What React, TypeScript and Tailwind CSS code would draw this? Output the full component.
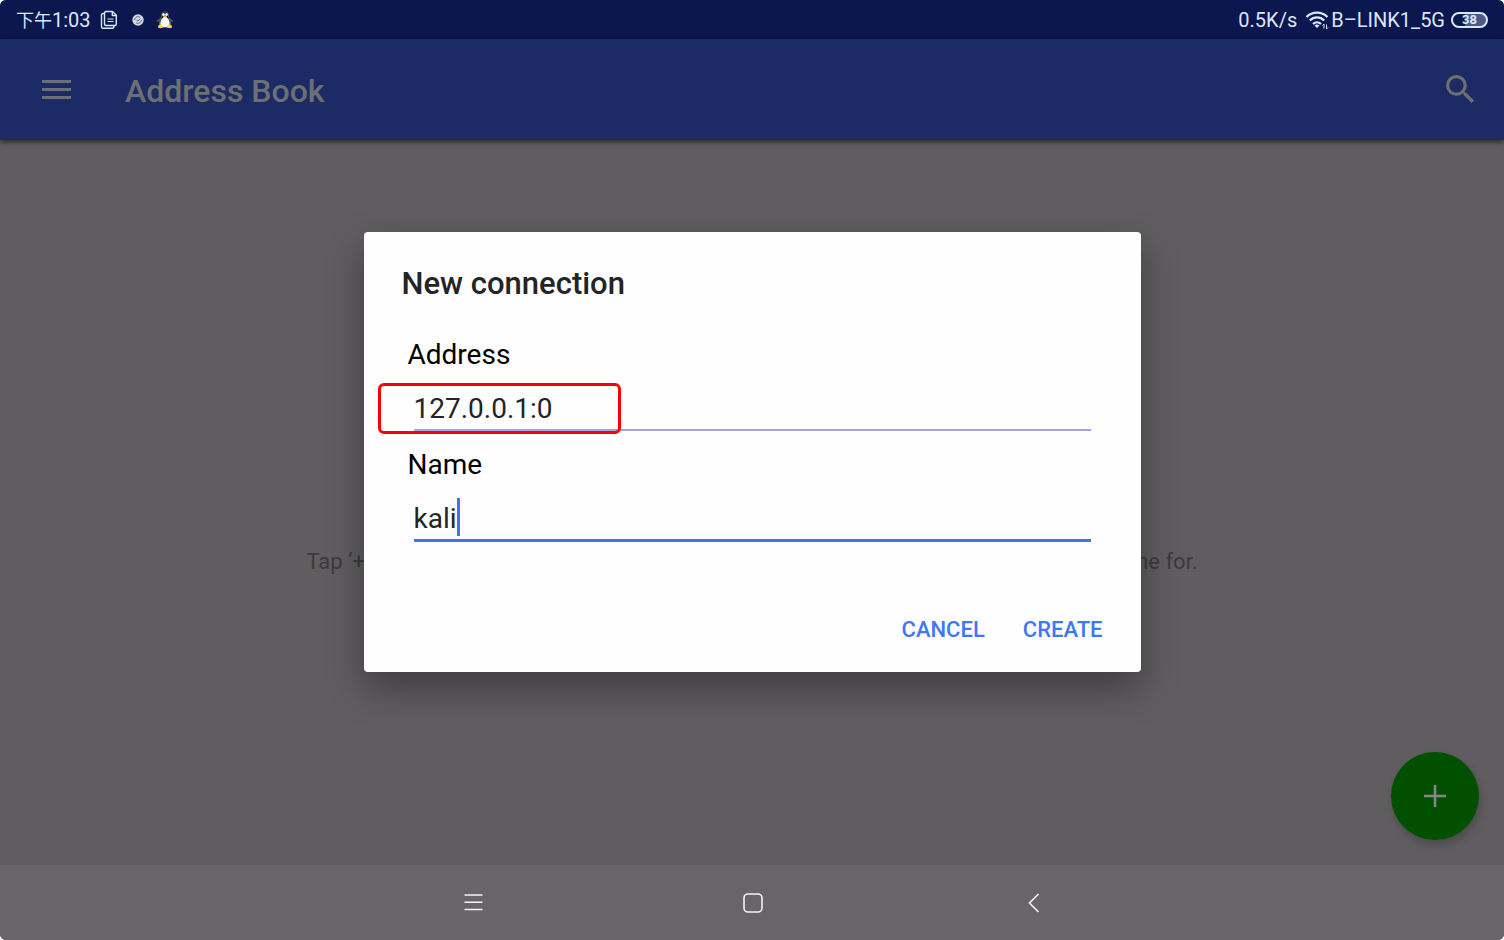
import React from "react";

function ClipboardIcon() {
  return (
    <svg viewBox="0 0 18 20" className="h-5 w-[18px]" fill="none" stroke="#dce6fa" strokeWidth="1.4" strokeLinejoin="round">
      <path d="M6 1.500h6.500L16.300 5.300V14q0 1.500-1.500 1.500H6Q4.500 15.500 4.500 14V3Q4.500 1.500 6 1.500Z" />
      <path d="M12.300 1.500v4h4M4.500 3.500H3Q1.500 3.500 1.500 5V16.500Q1.500 18.300 3 18.300h9.500Q14 18.300 14 15.500" />
      <path d="M7.500 9h6M7.500 11.500h6" strokeWidth="1.100" />
    </svg>
  );
}

function SyncBadgeIcon() {
  return (
    <svg viewBox="0 0 12 12" className="h-3 w-3">
      <circle cx="6" cy="6" r="5.700" fill="#d5dae4" />
      <path d="M2.500 6C3 3 5.500 2 8 3.200M9.500 6C9 9 6.500 10 4 8.800M4.500 6l1.500 1 2.500-2.500" fill="none" stroke="#4a567c" strokeWidth=".9" />
    </svg>
  );
}

function PenguinIcon() {
  return (
    <svg viewBox="0 0 18 18" className="h-[18px] w-[18px]">
      <path d="M1.200 10.500 5 7.500M16.800 10.500 13 7.500" stroke="#4a4f5e" strokeWidth="1.800" />
      <path d="M9 .8C6.400.8 5.500 2.500 5.600 4.600 5.700 7 3.200 9.500 3.400 13L5 16h8l1.600-3c.2-3.500-2.300-6-2.200-8.400C12.500 2.500 11.600.8 9 .8Z" fill="#11141c" stroke="#6b7280" strokeWidth=".8" />
      <path d="M9 5.500C6.300 6 4.300 9.500 4.300 12.500 4.300 15 6.500 16.300 9 16.300s4.700-1.300 4.700-3.800C13.700 9.500 11.700 6 9 5.500Z" fill="#f6f6f2" />
      <ellipse cx="7.500" cy="3.600" rx="1.300" ry="1.600" fill="#fff" />
      <ellipse cx="10.500" cy="3.600" rx="1.300" ry="1.600" fill="#fff" />
      <path d="M7 5.200 9 4.300l2 .9-2 1.300Z" fill="#e8bf35" />
      <path d="M2.300 14.500 5 13l2.500 3.500L4 17.300 2 16.500ZM15.700 14.500 13 13l-2.500 3.500 3.500.8 2-.8Z" fill="#f0dc3c" />
    </svg>
  );
}

function WifiIcon() {
  return (
    <svg viewBox="0 0 24 20" className="h-5 w-6" fill="none" stroke="#dce6fa" strokeWidth="2.200">
      <path d="M1.500 7C7.500 1.200 16.500 1.200 22.500 7M4.800 10.500c4-4.200 10.400-4.200 14.400 0M8 14c2.300-2.300 5.700-2.300 8 0" />
      <path d="M9.500 15.500q2.500-2 5 0L12 18Z" fill="#dce6fa" stroke="none" />
      <path d="M19 14v4.500M19 14l-1.500 1.500M21.500 19V14.500M21.500 19l1.500-1.500" strokeWidth="1" />
    </svg>
  );
}

function StatusBar() {
  return (
    <div className="flex h-[39px] items-center justify-between bg-[#0c164f] px-4 text-xl text-[#dce6fa]">
      <div className="flex items-center">
        <span className="pt-0.5 font-['Roboto','Noto_Sans_CJK_SC',sans-serif]">
          <span className="text-lg">下午</span>1:03
        </span>
        <span className="ml-[9px]"><ClipboardIcon /></span>
        <span className="ml-3.5"><SyncBadgeIcon /></span>
        <span className="ml-3"><PenguinIcon /></span>
      </div>
      <div className="flex items-center font-['Roboto',sans-serif]">
        <span className="pt-px">0.5K/s</span>
        <span className="ml-2"><WifiIcon /></span>
        <span className="ml-0.5 pt-px">B–LINK1_5G</span>
        <span className="ml-1.5 flex h-4 w-[37px] items-center justify-center rounded-full border-2 border-[#dce6fa] bg-linear-to-r from-[#0c164f] from-35% to-[#4d5988] to-35% text-[13px] leading-3 font-bold">
          38
        </span>
      </div>
    </div>
  );
}

function AppBar() {
  return (
    <header className="flex h-[101px] items-center bg-[#1c2b65] pr-[30px] pl-[42px] text-[#6d7073] shadow-[0_2px_5px_rgba(0,0,0,0.6)]">
      <button type="button" aria-label="Menu">
        <svg viewBox="0 0 29 20" className="h-5 w-[29px]" fill="currentColor">
          <path d="M0 0h29v3H0zM0 8h29v3H0zM0 16h29v3H0z" />
        </svg>
      </button>
      <h1 className="ml-[54px] flex-1 pt-0.5 text-[32px] font-medium">Address Book</h1>
      <button type="button" aria-label="Search" className="pb-0.5">
        <svg viewBox="3 3 17.500 17.500" className="h-7 w-7" fill="currentColor">
          <path d="M15.500 14h-.79l-.28-.27A6.471 6.471 0 0 0 16 9.500 6.500 6.500 0 1 0 9.500 16c1.610 0 3.090-.59 4.230-1.570l.27.28v.79l5 4.990L20.490 19l-4.990-5zm-6 0C7.010 14 5 11.990 5 9.500S7.010 5 9.500 5 14 7.010 14 9.500 11.990 14 9.500 14z" />
        </svg>
      </button>
    </header>
  );
}

function ConnectionDialog() {
  return (
    <form
      role="dialog"
      aria-labelledby="dialog-title"
      className="w-[777px] rounded bg-[#fefefe] px-[38px] pt-7 pb-[19px] shadow-[0_16px_36px_rgba(0,0,0,0.35)]"
    >
      <h2 id="dialog-title" className="text-[31px] leading-[48px] font-medium text-[#242426]">
        New connection
      </h2>
      <div className="pt-[22px] pr-3 pl-1.5 text-[28px] text-black">
        <label htmlFor="address" className="block h-12 leading-[50px]">Address</label>
        <div className="relative ml-1.5 h-[53px] border-b-2 border-[#a5a6e0]">
          <input
            id="address"
            defaultValue="127.0.0.1:0"
            className="h-[53px] w-full bg-transparent pt-2 text-[#242426] outline-none"
          />
          <div className="pointer-events-none absolute top-[5px] -left-9 h-[51px] w-[243px] rounded-md border-3 border-[#fb0007]" />
        </div>
        <label htmlFor="name" className="mt-2 block h-12 leading-[52px]">Name</label>
        <div className="ml-1.5 flex h-[55px] items-center border-b-3 border-[#4074ee] pt-2">
          <input
            id="name"
            defaultValue="kali"
            className="field-sizing-content bg-transparent pt-1 text-[#242426] caret-transparent outline-none"
          />
          <span className="h-[38px] w-[3px] bg-[#4074ee]" />
        </div>
      </div>
      <div className="mt-[63px] flex justify-end gap-[38px] text-[22px] font-medium text-[#3f78f2]">
        <button type="button" className="h-12">CANCEL</button>
        <button type="submit" className="h-12">CREATE</button>
      </div>
    </form>
  );
}

function NavigationBar() {
  return (
    <nav className="flex h-[75px] items-center justify-center gap-[260px] bg-[#686568] pl-0.5 text-[#f4f4f4]">
      <button type="button" aria-label="Recent apps">
        <svg viewBox="0 0 20 20" className="h-5 w-5" stroke="currentColor" strokeWidth="1.500">
          <path d="M1.500 2h18M1.500 9.300h18M1.500 16.500h18" />
        </svg>
      </button>
      <button type="button" aria-label="Home">
        <svg viewBox="0 0 20 20" className="h-5 w-5" fill="none" stroke="currentColor" strokeWidth="1.600">
          <rect x="1" y="1" width="18" height="18" rx="4" />
        </svg>
      </button>
      <button type="button" aria-label="Back">
        <svg viewBox="0 0 20 20" className="h-5 w-5" fill="none" stroke="currentColor" strokeWidth="1.600">
          <path d="M15.500 1 6.500 10l9 9" />
        </svg>
      </button>
    </nav>
  );
}

export default function App() {
  return (
    <div className="min-h-screen bg-white font-['Roboto',sans-serif]">
      <div className="flex min-h-screen flex-col overflow-hidden rounded-md bg-[#605d60]">
        <StatusBar />
        <div className="relative flex flex-1 flex-col">
          <AppBar />
          <main className="flex flex-1 items-center justify-center pt-[117px]">
            <p className="text-[22px] whitespace-nowrap text-[#3c3a3c]">
              Tap ‘+’ to connect directly to a new computer that you know the IP address or hostname for.
            </p>
          </main>
          <button
            type="button"
            aria-label="Add connection"
            className="absolute right-[25px] bottom-[25px] flex size-[88px] items-center justify-center rounded-full bg-[#005000] text-[#88868a] shadow-[2px_5px_8px_rgba(0,0,0,0.2)]"
          >
            <svg viewBox="0 0 22 22" className="h-[22px] w-[22px]" fill="currentColor">
              <path d="M9.700 0h2.600v9.700H22v2.600h-9.700V22H9.700v-9.700H0V9.700h9.700z" />
            </svg>
          </button>
          <div className="absolute inset-0 flex items-center justify-center">
            <ConnectionDialog />
          </div>
        </div>
        <NavigationBar />
      </div>
    </div>
  );
}
